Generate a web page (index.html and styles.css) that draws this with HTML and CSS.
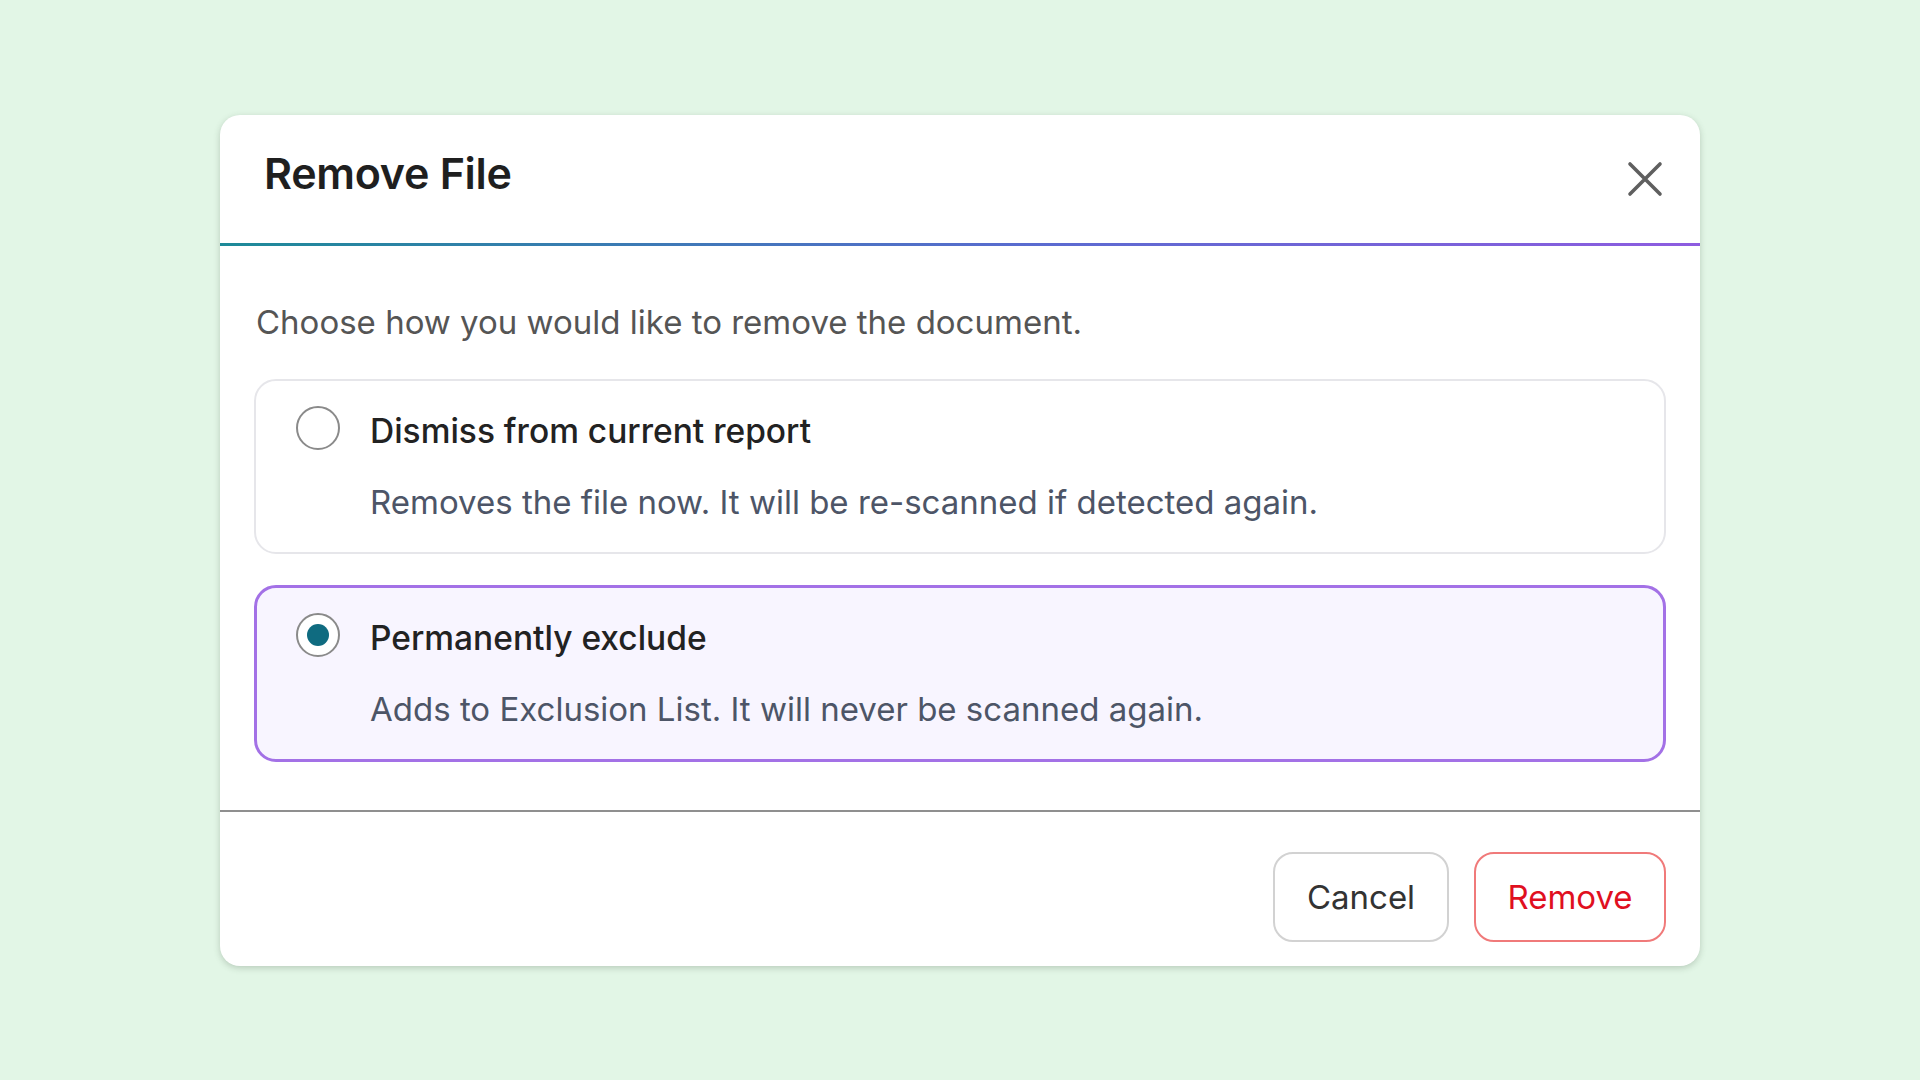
FILE: index.html
```html
<!DOCTYPE html>
<html lang="en">
<head>
<meta charset="utf-8">
<title>Remove File</title>
<link rel="stylesheet" href="styles.css">
</head>
<body>
<div class="modal">
  <div class="modal-header">
    <h2 class="modal-title">Remove File</h2>
    <button class="close-btn" aria-label="Close">
      <svg viewBox="0 0 36 36" width="36" height="36"><path d="M3 3 L33 33 M33 3 L3 33" stroke="#5f5f5f" stroke-width="3.6" stroke-linecap="round" fill="none"/></svg>
    </button>
  </div>
  <div class="modal-body">
    <p class="intro">Choose how you would like to remove the document.</p>
    <label class="option">
      <span class="radio"></span>
      <span class="opt-title">Dismiss from current report</span>
      <span class="opt-desc">Removes the file now. It will be re-scanned if detected again.</span>
    </label>
    <label class="option selected">
      <span class="radio checked"></span>
      <span class="opt-title">Permanently exclude</span>
      <span class="opt-desc">Adds to Exclusion List. It will never be scanned again.</span>
    </label>
  </div>
  <div class="modal-footer">
    <button class="btn btn-cancel">Cancel</button>
    <button class="btn btn-remove">Remove</button>
  </div>
</div>
</body>
</html>
```
FILE: styles.css
```css
* { box-sizing: border-box; }
html, body { margin: 0; padding: 0; }
body {
  background: #e2f6e6;
  height: 100vh;
  display: flex;
  align-items: center;
  justify-content: center;
  font-family: Inter, "Noto Sans", sans-serif;
}
.modal {
  width: 1480px;
  background: #ffffff;
  border-radius: 20px;
  box-shadow: 0 2px 6px rgba(60, 80, 60, 0.25);
  overflow: hidden;
}
.modal-header {
  height: 131px;
  display: flex;
  align-items: center;
  justify-content: space-between;
  padding: 0 37px 12px 44px;
  border-bottom: 3px solid transparent;
  border-image: linear-gradient(90deg, #1d8a98, #5a6bd0 55%, #8e5ce0) 1;
}
.modal-title {
  margin: 0;
  font-size: 43px;
  font-weight: 600;
  color: #1f1f1f;
  letter-spacing: -0.3px;
}
.close-btn {
  background: none;
  border: 0;
  padding: 0;
  width: 36px;
  height: 36px;
  display: flex;
  margin-top: 12px;
  cursor: pointer;
}
.modal-body {
  padding: 54px 34px 48px 34px;
  display: flex;
  flex-direction: column;
  gap: 31px;
}
.intro {
  margin: 0 0 4px 2px;
  font-size: 33px;
  line-height: 44px;
  color: #555555;
}
.option {
  display: grid;
  grid-template-columns: 44px 1fr;
  column-gap: 30px;
  row-gap: 27px;
  align-items: center;
  padding: 28px 40px 28px 40px;
  border: 2px solid #e6e6ea;
  border-radius: 22px;
  background: #ffffff;
}
.option.selected {
  border: 3px solid #a371e6;
  background: #f8f5ff;
  padding: 28px 39px 28px 39px;
}
.radio {
  width: 44px;
  height: 44px;
  border-radius: 50%;
  border: 2px solid #8a8a8a;
  background: #ffffff;
  display: flex;
  align-items: center;
  justify-content: center;
  margin-top: -6px;
}
.radio.checked::after {
  content: "";
  width: 22px;
  height: 22px;
  border-radius: 50%;
  background: #0f6b80;
}
.opt-title {
  font-size: 33.5px;
  line-height: 44px;
  font-weight: 500;
  color: #222222;
}
.opt-desc {
  grid-column: 2;
  font-size: 33px;
  line-height: 44px;
  color: #4d5567;
}
.modal-footer {
  border-top: 2px solid #8f8f8f;
  display: flex;
  justify-content: flex-end;
  gap: 25px;
  padding: 40px 34px 24px 34px;
}
.btn {
  height: 90px;
  border-radius: 20px;
  background: #ffffff;
  font-family: Inter, "Noto Sans", sans-serif;
  font-size: 33px;
  padding: 0 20px;
  cursor: pointer;
}
.btn-cancel {
  width: 176px;
  border: 2px solid #d2d2d2;
  color: #333333;
}
.btn-remove {
  width: 192px;
  border: 2px solid #f07a7a;
  color: #e0101f;
}
```
